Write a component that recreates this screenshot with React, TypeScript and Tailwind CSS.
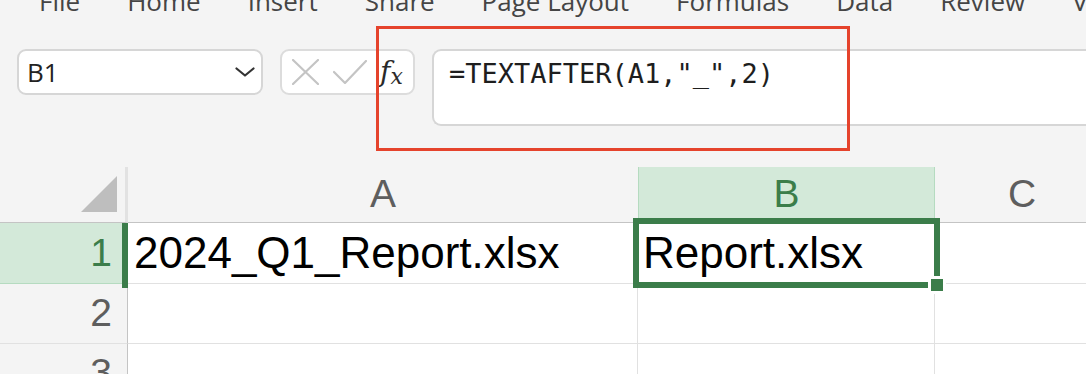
import React from 'react'

const menuItems = ['File', 'Home', 'Insert', 'Share', 'Page Layout', 'Formulas', 'Data', 'Review', 'View']

function Chevron() {
    return (
        <svg width="20" height="10" viewBox="0 0 20 10" fill="none">
            <path d="M1.5 1.5 L10 8.5 L18.5 1.5" stroke="#333" strokeWidth="2.2" strokeLinecap="round" strokeLinejoin="round" />
        </svg>
    )
}

function CancelIcon() {
    return (
        <svg width="27" height="26" viewBox="0 0 27 26" fill="none">
            <path d="M1 1 L26 25 M26 1 L1 25" stroke="#c4c4c4" strokeWidth="2.2" strokeLinecap="round" />
        </svg>
    )
}

function CheckIcon() {
    return (
        <svg width="34" height="24" viewBox="0 0 34 24" fill="none">
            <path d="M1 12 L12 23 L33 1" stroke="#c4c4c4" strokeWidth="2.2" strokeLinecap="round" strokeLinejoin="round" />
        </svg>
    )
}

export default function App() {
    return (
        <div className="relative w-[1086px] h-[374px] overflow-hidden bg-[#f4f4f4]">
            {/* ribbon tabs, cut off at the top */}
            <div className="h-[49px] overflow-hidden">
                <div className="flex gap-[47px] pl-[39px] -mt-[12px] text-[26px] leading-[26px] text-[#454545] whitespace-nowrap [font-family:'Open_Sans',sans-serif]">
                    {menuItems.map((item) => (
                        <span key={item}>{item}</span>
                    ))}
                </div>
            </div>

            {/* name box + formula bar */}
            <div className="h-[118px] flex items-start pl-[17px]">
                <div className="w-[246px] h-[46px] flex items-center justify-between pl-[8px] pr-[6px] bg-white border-2 border-[#d6d6d6] rounded-[9px]">
                    <span className="text-[26px] text-[#222] [font-family:'Open_Sans',sans-serif]">B1</span>
                    <Chevron />
                </div>
                <div className="ml-[17px] w-[135px] h-[46px] flex items-center pl-[10px] bg-white border-2 border-[#dcdcdc] rounded-[9px]">
                    <CancelIcon />
                    <span className="ml-[14px]">
                        <CheckIcon />
                    </span>
                    <span className="ml-[13px] flex items-baseline text-[#2a2a2a] [font-family:'DejaVu_Serif',serif] italic">
                        <span className="text-[28px] leading-none">f</span>
                        <span className="text-[22px] leading-none translate-y-[3px]">x</span>
                    </span>
                </div>
                <div className="ml-[17px] flex-1 h-[77px] bg-white border-y-2 border-l-2 border-[#d6d6d6] rounded-l-[9px] pl-[15px] pt-[3px]">
                    <span className="text-[27px] leading-[40px] text-[#1e1e1e] whitespace-nowrap [font-family:'DejaVu_Sans_Mono',monospace]">
                        =TEXTAFTER(A1,"_",2)
                    </span>
                </div>
            </div>

            {/* sheet grid */}
            <div className="grid grid-cols-[128px_510px_297px_174px] [font-family:'Liberation_Sans',Arial,sans-serif]">
                {/* header row */}
                <div className="h-[56px] flex items-end justify-end pr-[8px] pb-[10px] border-r-[3px] border-[#e2e2e2] border-b border-b-[#c4c4c4]">
                    <svg width="36" height="36" viewBox="0 0 36 36">
                        <polygon points="36,0 36,36 0,36" fill="#bebebe" />
                    </svg>
                </div>
                <div className="h-[56px] flex items-center justify-center text-[39px] text-[#5e5e5e] border-b border-[#c4c4c4]">A</div>
                <div className="h-[56px] flex items-center justify-center text-[39px] text-[#3b7d4a] bg-[#d3e9d9] border-x border-x-[#b5dbc0] border-b border-b-[#c4c4c4]">B</div>
                <div className="h-[56px] flex items-center justify-center text-[39px] text-[#5e5e5e] border-b border-[#c4c4c4]">C</div>

                {/* row 1 */}
                <div className="relative h-[61px] flex items-center justify-end pr-[16px] text-[39px] text-[#3b7d4a] bg-[#d3e9d9] border-b border-[#b5dbc0]">
                    1
                    <div className="absolute right-0 top-0 w-[6px] h-[65px] bg-[#3b7d4a]" />
                </div>
                <div className="h-[61px] flex items-center pl-[6px] text-[44px] text-black bg-white border-b border-r border-[#e1e1e1] whitespace-nowrap">2024_Q1_Report.xlsx</div>
                <div className="h-[61px] flex items-center pl-[5px] text-[44px] text-black bg-white border-b border-r border-[#e1e1e1] whitespace-nowrap">Report.xlsx</div>
                <div className="h-[61px] bg-white border-b border-[#e1e1e1]" />

                {/* row 2 */}
                <div className="h-[60px] flex items-center justify-end pr-[15px] text-[39px] text-[#5e5e5e] border-b border-[#e1e1e1] border-r border-r-[#c4c4c4]">2</div>
                <div className="h-[60px] bg-white border-b border-r border-[#e1e1e1]" />
                <div className="h-[60px] bg-white border-b border-r border-[#e1e1e1]" />
                <div className="h-[60px] bg-white border-b border-[#e1e1e1]" />

                {/* row 3 */}
                <div className="h-[60px] flex items-center justify-end pr-[15px] text-[39px] text-[#5e5e5e] border-b border-[#e1e1e1] border-r border-r-[#c4c4c4]">3</div>
                <div className="h-[60px] bg-white border-b border-r border-[#e1e1e1]" />
                <div className="h-[60px] bg-white border-b border-r border-[#e1e1e1]" />
                <div className="h-[60px] bg-white border-b border-[#e1e1e1]" />
            </div>

            {/* active cell selection */}
            <div className="absolute left-[633px] top-[218px] w-[307px] h-[70px] border-[6px] border-[#3b7d4a] pointer-events-none" />
            <div className="absolute left-[928px] top-[276px] w-[18px] h-[18px] p-[3px] bg-white">
                <div className="w-[12px] h-[12px] bg-[#3b7d4a]" />
            </div>

            {/* red highlight around the formula */}
            <div className="absolute left-[376px] top-[26px] w-[474px] h-[125px] border-[3px] border-[#e5432c]" />
        </div>
    )
}
